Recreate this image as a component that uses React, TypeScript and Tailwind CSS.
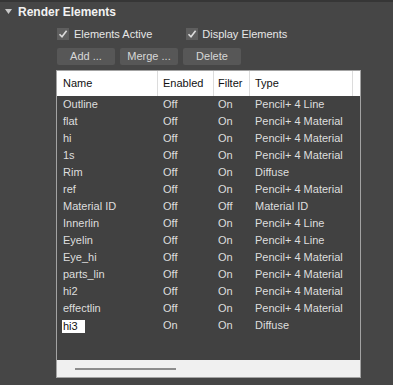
import React from "react";

const rows: [string, string, string, string][] = [
  ["Outline", "Off", "On", "Pencil+ 4 Line"],
  ["flat", "Off", "On", "Pencil+ 4 Material"],
  ["hi", "Off", "On", "Pencil+ 4 Material"],
  ["1s", "Off", "On", "Pencil+ 4 Material"],
  ["Rim", "Off", "On", "Diffuse"],
  ["ref", "Off", "On", "Pencil+ 4 Material"],
  ["Material ID", "Off", "Off", "Material ID"],
  ["Innerlin", "Off", "On", "Pencil+ 4 Line"],
  ["Eyelin", "Off", "On", "Pencil+ 4 Line"],
  ["Eye_hi", "Off", "On", "Pencil+ 4 Material"],
  ["parts_lin", "Off", "On", "Pencil+ 4 Material"],
  ["hi2", "Off", "On", "Pencil+ 4 Material"],
  ["effectlin", "Off", "On", "Pencil+ 4 Material"],
  ["hi3", "On", "On", "Diffuse"],
];

function Check() {
  return (
    <div className="w-[12px] h-[12px] bg-[#5e5e5e] flex items-center justify-center">
      <svg width="10" height="10" viewBox="0 0 10 10">
        <path d="M1.5 5.2 L4 7.8 L8.6 1.8" stroke="#dcdcdc" strokeWidth="1.6" fill="none" />
      </svg>
    </div>
  );
}

function Btn({ label }: { label: string }) {
  return (
    <div className="w-[58px] h-[17px] bg-[#575757] rounded-[2px] flex items-center justify-center text-[#d8d8d8] text-[11px]">
      {label}
    </div>
  );
}

export default function App() {
  return (
    <div
      className="w-[393px] h-[385px] bg-[#464646] border-t-2 border-[#363636] overflow-hidden flex flex-col"
      style={{ fontFamily: '"Liberation Sans", Arial, sans-serif' }}
    >
      <div className="h-[20px] flex items-center pl-[5px]">
        <svg width="7" height="6" viewBox="0 0 7 6">
          <path d="M0 0 L7 0 L3.5 5 Z" fill="#c8c8c8" />
        </svg>
        <span className="ml-[6px] text-[12px] font-bold text-[#f2f2f2]">Render Elements</span>
      </div>
      <div className="mt-[6px] h-[12px] flex items-center pl-[57px] text-[11px] text-[#e6e6e6]">
        <Check />
        <span className="ml-[5px]">Elements Active</span>
        <div className="ml-[34px]">
          <Check />
        </div>
        <span className="ml-[4px]">Display Elements</span>
      </div>
      <div className="mt-[8px] flex gap-[5px] pl-[57px]">
        <Btn label="Add ..." />
        <Btn label="Merge ..." />
        <Btn label="Delete" />
      </div>
      <div className="mt-[5px] ml-[56px] w-[305px] h-[308px] border border-[#a3a3a3] flex flex-col bg-[#414141]">
        <div className="h-[25px] bg-white flex text-[11px] text-[#111]">
          <div className="w-[100px] pl-[6px] flex items-center">Name</div>
          <div className="w-[56px] pl-[5px] flex items-center border-l border-[#dcdcdc]">Enabled</div>
          <div className="w-[36px] pl-[4px] flex items-center border-l border-[#dcdcdc]">Filter</div>
          <div className="w-[103px] pl-[5px] flex items-center border-l border-[#dcdcdc]">Type</div>
          <div className="flex-1 border-l border-[#dcdcdc]" />
        </div>
        <div className="flex-1 flex flex-col text-[11px] text-[#dedede]">
          {rows.map((r, i) => {
            const sel = i === rows.length - 1;
            return (
              <div key={i} className="h-[17px] flex leading-[17px]">
                <div className="w-[100px] pl-[6px] flex">
                  {sel ? (
                    <span className="-ml-[1px] mt-[3px] h-[13px] leading-[13px] pl-[1px] pr-[7px] bg-white text-[#111]">
                      {r[0]}
                    </span>
                  ) : (
                    r[0]
                  )}
                </div>
                <div className="w-[56px] pl-[6px]">{r[1]}</div>
                <div className="w-[36px] pl-[5px]">{r[2]}</div>
                <div className="w-[103px] pl-[6px] whitespace-nowrap">{r[3]}</div>
              </div>
            );
          })}
        </div>
        <div className="h-[17px] bg-[#f0f0f0] flex items-center pl-[18px]">
          <div className="w-[101px] h-[2px] bg-[#8c8c8c] mt-[1px]" />
        </div>
      </div>
    </div>
  );
}
